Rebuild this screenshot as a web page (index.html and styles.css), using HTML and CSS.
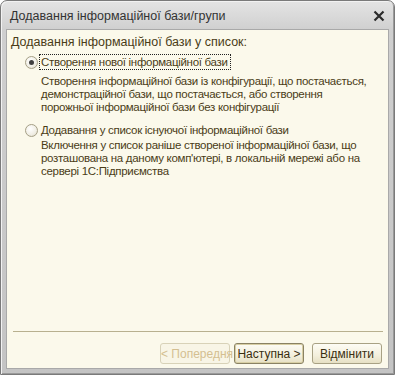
FILE: index.html
```html
<!DOCTYPE html>
<html lang="uk">
<head>
  <meta charset="UTF-8" />
  <title>Додавання інформаційної бази/групи</title>
  <link rel="stylesheet" href="styles.css">
</head>
<body>
  <div class="window">
    <div class="titlebar">
      <div class="title">Додавання інформаційної бази/групи</div>
      <div class="close">
        <svg width="12" height="12" viewBox="0 0 12 12">
          <path d="M1.5 1.5 L10.5 10.5 M10.5 1.5 L1.5 10.5" stroke="#2b2b2b" stroke-width="2.2" />
        </svg>
      </div>
    </div>

    <div class="panel">
      <div class="heading">Додавання інформаційної бази у список:</div>

      <div class="option first">
        <div class="option-row">
          <span class="radio checked"></span>
          <span class="option-label focused">Створення нової інформаційної бази</span>
        </div>
        <div class="option-desc">
          Створення інформаційної бази із конфігурації, що постачається,<br>
          демонстраційної бази, що постачається, або створення<br>
          порожньої інформаційної бази без конфігурації
        </div>
      </div>

      <div class="option second">
        <div class="option-row">
          <span class="radio"></span>
          <span class="option-label">Додавання у список існуючої інформаційної бази</span>
        </div>
        <div class="option-desc">
          Включення у список раніше створеної інформаційної бази, що<br>
          розташована на даному комп'ютері, в локальній мережі або на<br>
          сервері 1С:Підприємства
        </div>
      </div>

      <div class="spacer"></div>

      <div class="separator"></div>

      <div class="buttons">
        <button class="btn" disabled>&lt; Попередня</button>
        <button class="btn default">Наступна &gt;</button>
        <button class="btn cancel">Відмінити</button>
      </div>
    </div>
  </div>
</body>
</html>
```

FILE: styles.css
```css
body {
  margin: 0;
  padding: 0;
  font-family: 'Liberation Sans', Arial, sans-serif;
  font-size: 12px;
  background-color: #ffffff;
}

.window {
  width: 395px;
  height: 375px;
  box-sizing: border-box;
  display: flex;
  flex-direction: column;
  border: 1px solid #7a7a7a;
  border-radius: 7px 7px 0 0;
  background: linear-gradient(to bottom, #e4e4e4 0%, #cfcfcf 8%, #c4c4c4 100%);
  box-shadow: inset 1px 1px 0 #f2f2f2, inset -1px -1px 0 #9a9a9a;
}

.titlebar {
  height: 28px;
  display: flex;
  align-items: center;
  justify-content: space-between;
  padding: 0 9px 0 9px;
}

.title {
  font-size: 12.5px;
  color: #333333;
  padding-top: 2px;
}

.close {
  width: 12px;
  height: 12px;
  margin-top: 2px;
}

.panel {
  flex: 1;
  margin: 0 5px 5px 5px;
  background-color: #fbf9eb;
  border: 1px solid #a9a9a9;
  display: flex;
  flex-direction: column;
  color: #4a3c17;
}

.heading {
  font-size: 12.5px;
  line-height: 16px;
  padding: 4px 0 0 4px;
}

.option {
  display: flex;
  flex-direction: column;
  padding-left: 18px;
}

.option-row {
  display: flex;
  align-items: center;
  height: 18px;
  margin-top: 3px;
}

.option.second .option-row {
  margin-top: 7px;
}

.radio {
  width: 11px;
  height: 11px;
  border-radius: 50%;
  border: 1px solid #a59f86;
  background: radial-gradient(circle at 40% 35%, #ffffff 0%, #f0eee4 60%, #d9d5c2 100%);
  position: relative;
  margin-right: 1px;
}

.radio.checked::after {
  content: "";
  position: absolute;
  left: 3px;
  top: 3px;
  width: 5px;
  height: 5px;
  border-radius: 50%;
  background-color: #3f3f3f;
}

.option-label {
  font-size: 11.5px;
  letter-spacing: -0.3px;
  line-height: 14px;
  padding: 0 2px 0 1px;
  border: 1px dotted transparent;
  white-space: nowrap;
}

.option-label.focused {
  border-color: #222222;
}

.option-desc {
  font-size: 11.5px;
  letter-spacing: -0.3px;
  line-height: 13px;
  padding: 4px 0 0 16px;
  white-space: nowrap;
}

.option.second .option-desc {
  padding-top: 0;
}

.spacer {
  flex: 1;
}

.separator {
  height: 1px;
  background-color: #b8b08f;
  margin: 0 5px 11px 6px;
}

.buttons {
  display: flex;
  justify-content: flex-end;
  gap: 4px;
  padding: 0 6px 4px 0;
}

.btn {
  font-family: 'Liberation Sans', Arial, sans-serif;
  font-size: 12px;
  width: 70px;
  height: 21px;
  padding: 0;
  white-space: nowrap;
  color: #3a2f10;
  background: linear-gradient(to bottom, #fdfcf5 0%, #f3efdc 60%, #e6e0c4 100%);
  border: 1px solid #a8a184;
  border-radius: 3px;
}

.btn:disabled {
  color: #d4bf91;
  border-color: #d8d2b8;
  background: #f8f5e6;
}

.btn.default {
  border-color: #8a8263;
  box-shadow: inset 0 0 0 1px #d8cfa4;
}

.btn.cancel {
  margin-left: 4px;
}
```
